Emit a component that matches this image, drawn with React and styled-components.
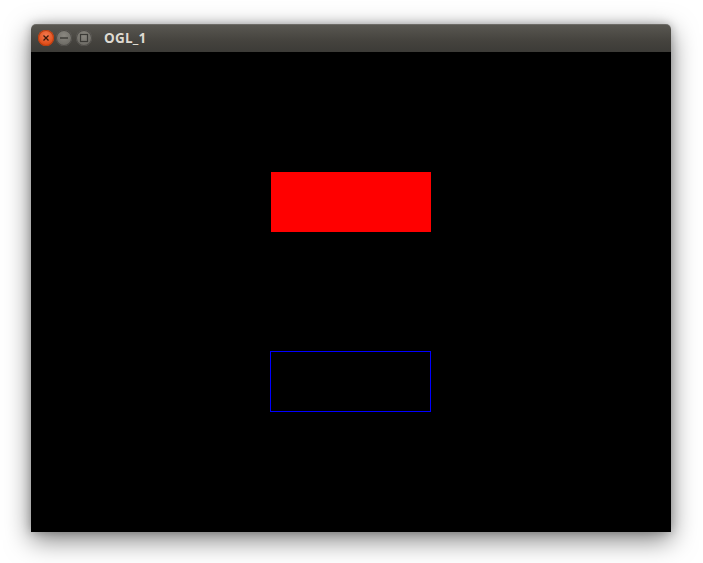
import React from "react";
import styled, { createGlobalStyle } from "styled-components";

const Global = createGlobalStyle`
  html, body { margin: 0; padding: 0; background: #ffffff; }
  body { width: 703px; height: 563px; overflow: hidden; }
`;

const Page = styled.div`
  display: flex;
  align-items: flex-start;
  padding: 24px 0 0 31px;
`;

const Window = styled.div`
  width: 640px;
  display: flex;
  flex-direction: column;
  border-radius: 5px 5px 0 0;
  box-shadow: 0 8px 26px rgba(0, 0, 0, 0.5), 0 0 10px rgba(0, 0, 0, 0.25);
`;

const TitleBar = styled.div`
  height: 28px;
  display: flex;
  align-items: center;
  padding-left: 7px;
  border-radius: 5px 5px 0 0;
  background: linear-gradient(#5a5852, #45433e 60%, #3c3b37);
  box-shadow: inset 0 1px 0 rgba(255, 255, 255, 0.12);
`;

const Buttons = styled.div`
  display: flex;
  gap: 2px;
  align-items: center;
`;

const CtrlBtn = styled.div`
  width: 16px;
  height: 16px;
  border-radius: 50%;
  display: flex;
  align-items: center;
  justify-content: center;
  background: ${(p) =>
    p.$close
      ? "radial-gradient(circle at 50% 35%, #f47a50, #df4b16 70%)"
      : "radial-gradient(circle at 50% 35%, #8a8780, #6e6c66 70%)"};
  box-shadow: inset 0 0 0 1px ${(p) => (p.$close ? "#b83e12" : "#4e4c48")};
  margin-left: ${(p) => p.$ml || 0}px;
`;

const Title = styled.div`
  margin-left: 12px;
  font-family: "Open Sans", "DejaVu Sans", sans-serif;
  font-weight: 700;
  font-size: 13.5px;
  color: #dfdbd2;
  letter-spacing: 0.2px;
  padding-bottom: 1px;
`;

const Canvas = styled.div`
  position: relative;
  width: 640px;
  height: 480px;
  background: #000000;
`;

const FilledRect = styled.div`
  position: absolute;
  left: 240px;
  top: 120px;
  width: 160px;
  height: 60px;
  background: #ff0000;
`;

const OutlineRect = styled.div`
  position: absolute;
  left: 239px;
  top: 299px;
  width: 161px;
  height: 61px;
  box-sizing: border-box;
  border: 1px solid #0000ff;
`;

export default function App() {
  return (
    <>
      <Global />
      <Page>
        <Window>
          <TitleBar>
            <Buttons>
              <CtrlBtn $close>
                <svg width="8" height="8" viewBox="0 0 8 8">
                  <path d="M1.5 1.5 L6.5 6.5 M6.5 1.5 L1.5 6.5" stroke="#3a1a0c" strokeWidth="1.3" />
                </svg>
              </CtrlBtn>
              <CtrlBtn>
                <svg width="10" height="10" viewBox="0 0 10 10">
                  <path d="M1 5 H9" stroke="#3b3a36" strokeWidth="1.4" />
                </svg>
              </CtrlBtn>
              <CtrlBtn $ml={2}>
                <svg width="10" height="10" viewBox="0 0 10 10">
                  <rect x="1.5" y="1.5" width="7" height="7" fill="none" stroke="#3b3a36" strokeWidth="1.2" />
                </svg>
              </CtrlBtn>
            </Buttons>
            <Title>OGL_1</Title>
          </TitleBar>
          <Canvas>
            <FilledRect />
            <OutlineRect />
          </Canvas>
        </Window>
      </Page>
    </>
  );
}
